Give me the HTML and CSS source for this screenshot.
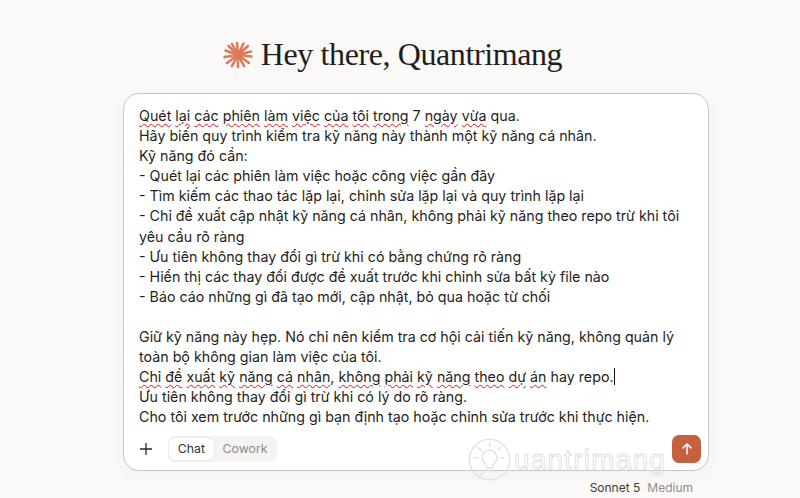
FILE: index.html
```html
<!DOCTYPE html>
<html lang="vi">
<head>
<meta charset="utf-8">
<title>Claude</title>
<link rel="stylesheet" href="styles.css">
</head>
<body>
<main class="page">
  <h1 class="greeting">
    <svg class="spark" viewBox="0 0 30 30" aria-hidden="true"><g stroke="#dd7a5a" stroke-width="2.6" stroke-linecap="round"><path d="M15 15 L14 3"/><path d="M15 15 L20.500 3.500"/><path d="M15 15 L25 6"/><path d="M15 15 L28 11.500"/><path d="M15 15 L28.500 16.500"/><path d="M15 15 L26 23"/><path d="M15 15 L21 26"/><path d="M15 15 L15 27"/><path d="M15 15 L9 26"/><path d="M15 15 L4 23"/><path d="M15 15 L1.500 17"/><path d="M15 15 L2.500 10.500"/><path d="M15 15 L5.500 6"/><path d="M15 15 L9 4"/></g></svg>
    <span>Hey there, Quantrimang</span>
  </h1>
  <section class="composer">
    <div class="text">
      <p><span class="sp">Quét</span> <span class="sp">lại</span> <span class="sp">các</span> <span class="sp">phiên</span> <span class="sp">làm</span> <span class="sp">việc</span> <span class="sp">của</span> <span class="sp">tôi</span> <span class="sp">trong</span> 7 <span class="sp">ngày</span> <span class="sp">vừa</span> qua.</p>
      <p>Hãy biến quy trình kiểm tra kỹ năng này thành một kỹ năng cá nhân.</p>
      <p>Kỹ năng đó cần:</p>
      <p>- Quét lại các phiên làm việc hoặc công việc gần đây</p>
      <p>- Tìm kiếm các thao tác lặp lại, chỉnh sửa lặp lại và quy trình lặp lại</p>
      <p>- Chỉ đề xuất cập nhật kỹ năng cá nhân, không phải kỹ năng theo repo trừ khi tôi yêu cầu rõ ràng</p>
      <p>- Ưu tiên không thay đổi gì trừ khi có bằng chứng rõ ràng</p>
      <p>- Hiển thị các thay đổi được đề xuất trước khi chỉnh sửa bất kỳ file nào</p>
      <p>- Báo cáo những gì đã tạo mới, cập nhật, bỏ qua hoặc từ chối</p>
      <p class="blank">&nbsp;</p>
      <p>Giữ kỹ năng này hẹp. Nó chỉ nên kiểm tra cơ hội cải tiến kỹ năng, không quản lý toàn bộ không gian làm việc của tôi.</p>
      <p><span class="sp">Chỉ</span> <span class="sp">đề</span> <span class="sp">xuất</span> <span class="sp">kỹ</span> <span class="sp">năng</span> <span class="sp">cá</span> <span class="sp">nhân</span>, <span class="sp">không</span> <span class="sp">phải</span> <span class="sp">kỹ</span> <span class="sp">năng</span> <span class="sp">theo</span> <span class="sp">dự</span> <span class="sp">án</span> hay repo.<span class="caret"></span></p>
      <p>Ưu tiên không thay đổi gì trừ khi có lý do rõ ràng.</p>
      <p>Cho tôi xem trước những gì bạn định tạo hoặc chỉnh sửa trước khi thực hiện.</p>
    </div>
    <div class="toolbar">
      <div class="tools">
        <svg class="plus" viewBox="0 0 14 14" aria-hidden="true"><path d="M7 1V13M1 7H13" stroke="#2b2a27" stroke-width="1.3" fill="none"/></svg>
        <div class="tabs"><span class="tab on">Chat</span><span class="tab">Cowork</span></div>
      </div>
      <button class="send" aria-label="Gửi"><svg viewBox="0 0 14 14" aria-hidden="true"><path d="M7 12.500V2M2.600 6.400 7 2l4.400 4.400" stroke="#fff" stroke-width="1.500" fill="none"/></svg></button>
    </div>
  </section>
  <div class="model"><span class="name">Sonnet 5</span><span class="effort">Medium</span></div>
</main>
<div class="watermark" aria-hidden="true">
  <svg class="wm-q" viewBox="0 0 50 50"><g fill="none" stroke="#e2e1dd" stroke-width="1.400" stroke-linecap="round"><circle cx="24" cy="24" r="21.500"/><path d="M17 38 l-5 6"/><path d="M24 14a8 8 0 0 0-5 14c1.500 1.500 2 3 2 5h6c0-2 .5-3.500 2-5a8 8 0 0 0-5-14zM22 36h4"/><path d="M24 6v4M12 11l3 3M36 11l-3 3M8 22h4M36 22h4"/></g></svg>
  <span class="wm-t">uantrimang</span>
</div>
</body>
</html>
```
FILE: styles.css
```css
* { box-sizing: border-box; }
html, body { margin: 0; height: 100%; }
body {
  position: relative;
  background: #faf9f7;
  color: #1f1e1c;
  font-family: Inter, "Noto Sans", sans-serif;
  overflow: hidden;
}
.page { width: 800px; height: 498px; padding-left: 32px; display: flex; flex-direction: column; align-items: center; }
.greeting {
  margin: 36px 0 0;
  padding-right: 47px;
  height: 37px;
  display: flex;
  align-items: center;
  gap: 8px;
  font-family: "Liberation Serif", serif;
  font-weight: 400;
  font-size: 32px;
  letter-spacing: -.4px;
  color: #1f1e1c;
}
.spark { width: 30px; height: 30px; }
.composer {
  margin: 20px 0 0;
  width: 586px;
  height: 378px;
  background: #fff;
  border: 1px solid #c9c8c4;
  border-radius: 16px;
  box-shadow: 0 4px 14px rgba(0,0,0,.035);
  padding: 12px 7px 7px 15px;
  display: flex;
  flex-direction: column;
  justify-content: space-between;
}
.text { font-size: 14.25px; line-height: 20.1px; padding-right: 7px; }
.text p { margin: 0; }
.sp { text-decoration: underline wavy #e8101c 1.2px; text-underline-offset: 1.5px; }
.caret { display: inline-block; width: 1px; height: 17px; background: #111; vertical-align: -3px; }
.toolbar { display: flex; justify-content: space-between; align-items: center; }
.tools { display: flex; align-items: center; gap: 15px; }
.plus { width: 14px; height: 14px; }
.tabs { display: flex; background: #f5f4f1; border-radius: 7px; padding: 2px 1px; }
.tab { font-size: 12.3px; line-height: 22px; padding: 0 8.8px; color: #8f8d87; }
.tab.on { background: #fff; color: #34332f; border-radius: 6px; box-shadow: 0 0 2px rgba(0,0,0,.15); }
.send { width: 29px; height: 28px; border: 0; padding: 7px; border-radius: 7px; background: #c6613f; display: block; }
.send svg { display: block; width: 14px; height: 14px; margin: 0 auto; }
.model { width: 586px; display: flex; justify-content: flex-end; gap: 7px; padding: 10px 16px 0 0; font-size: 12px; line-height: 14px; }
.name { color: #3d3c38; }
.effort { color: #8f8d87; }
.watermark { position: absolute; left: 467px; top: 437px; display: flex; align-items: flex-start; pointer-events: none; }
.wm-q { width: 47px; height: 47px; flex: none; }
.wm-t {
  font-family: "Liberation Sans", sans-serif;
  font-size: 28px;
  line-height: 46px;
  letter-spacing: 1.200px;
  color: rgba(255,255,255,.35);
  -webkit-text-stroke: .8px #deddd9;
}
```
